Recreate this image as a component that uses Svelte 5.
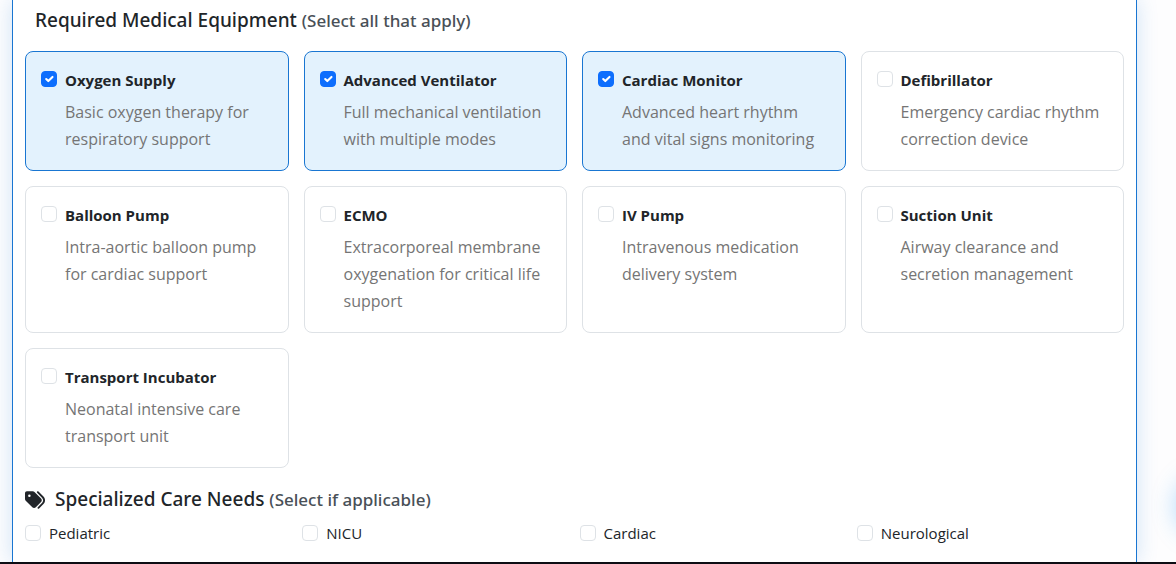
<script>
  let equipment = $state([
    { name: 'Oxygen Supply', text: 'Basic oxygen therapy for respiratory support', on: true },
    { name: 'Advanced Ventilator', text: 'Full mechanical ventilation with multiple modes', on: true },
    { name: 'Cardiac Monitor', text: 'Advanced heart rhythm and vital signs monitoring', on: true },
    { name: 'Defibrillator', text: 'Emergency cardiac rhythm correction device', on: false },
    { name: 'Balloon Pump', text: 'Intra-aortic balloon pump for cardiac support', on: false },
    { name: 'ECMO', text: 'Extracorporeal membrane oxygenation for critical life support', on: false },
    { name: 'IV Pump', text: 'Intravenous medication delivery system', on: false },
    { name: 'Suction Unit', text: 'Airway clearance and secretion management', on: false },
    { name: 'Transport Incubator', text: 'Neonatal intensive care transport unit', on: false }
  ]);
  let needs = $state([
    { name: 'Pediatric', on: false },
    { name: 'NICU', on: false },
    { name: 'Cardiac', on: false },
    { name: 'Neurological', on: false }
  ]);
</script>

<div class="page">
  <main class="panel">
    <h2 class="first">Required Medical Equipment <small>(Select all that apply)</small></h2>
    <div class="cards">
      {#each equipment as item, i}
        <label class="card" class:selected={item.on} for="equipment-{i}">
          <input type="checkbox" id="equipment-{i}" bind:checked={item.on} />
          <span class="body">
            <strong>{item.name}</strong>
            <span class="text">{item.text}</span>
          </span>
        </label>
      {/each}
    </div>

    <h2 class="second">
      <svg viewBox="0 0 512 512" aria-hidden="true">
        <path d="M345 39.1L472.8 168.4c52.4 53 52.4 138.2 0 191.2L360.8 472.9c-9.3 9.4-24.5 9.5-33.9 .2s-9.5-24.5-.2-33.9L438.6 325.9c33.9-34.3 33.9-89.4 0-123.7L310.9 72.9c-9.3-9.4-9.2-24.6 .2-33.9s24.6-9.2 33.9 .2zM0 229.5V80C0 53.5 21.5 32 48 32H197.5c17 0 33.3 6.7 45.3 18.7l168 168c25 25 25 65.5 0 90.5L277.3 442.7c-25 25-65.5 25-90.5 0l-168-168C6.7 262.7 0 246.5 0 229.5zM144 144a32 32 0 1 0 -64 0 32 32 0 1 0 64 0z" />
      </svg>
      <span>Specialized Care Needs <small>(Select if applicable)</small></span>
    </h2>
    <div class="needs">
      {#each needs as need, i}
        <label for="need-{i}">
          <input type="checkbox" id="need-{i}" bind:checked={need.on} />
          <span>{need.name}</span>
        </label>
      {/each}
    </div>
  </main>
  <div class="glow"></div>
</div>

<style>
  :global(body) {
    margin: 0;
    background: #fdfdfe;
  }
  .page {
    position: relative;
    overflow: hidden;
    padding: 0 39px 0 12px;
    border-bottom: 2px solid #0d0d14;
    font-family: 'Segoe UI', 'Open Sans', 'Noto Sans', sans-serif;
    font-size: 16px;
    color: #212529;
  }
  .panel {
    padding: 7px 12px 16px;
    border: solid #1976d2;
    border-width: 0 1px;
    background: #fff;
    box-shadow: 0 0 20px rgba(25, 118, 210, 0.2);
  }
  h2 {
    margin: 0;
    font-family: 'Segoe UI', 'Noto Sans', 'Open Sans', sans-serif;
    font-size: 19px;
    font-weight: 500;
    line-height: 27px;
  }
  small {
    font-size: 17px;
    line-height: 20px;
    color: #495057;
  }
  .first {
    padding-left: 10px;
    margin-bottom: 17px;
  }
  .cards {
    display: grid;
    grid-template-columns: repeat(4, minmax(0, 1fr));
    gap: 15px;
  }
  .card {
    display: flex;
    align-items: flex-start;
    gap: 8px;
    padding: 15px 15px 17px;
    border: 1px solid #dee2e6;
    border-radius: 8px;
    background: #fff;
    cursor: pointer;
  }
  .selected {
    border-color: #1976d2;
    background: #e3f2fd;
  }
  input {
    appearance: none;
    flex: none;
    box-sizing: border-box;
    width: 16px;
    height: 16px;
    margin: 4px 0 0;
    border: 1px solid #dee2e6;
    border-radius: 4px;
    background: #fff;
  }
  input:checked {
    border-color: #0d6efd;
    background: #0d6efd url("data:image/svg+xml,%3Csvg xmlns='http://www.w3.org/2000/svg' viewBox='0 0 20 20'%3E%3Cpath fill='none' stroke='%23fff' stroke-linecap='round' stroke-linejoin='round' stroke-width='3' d='m6 10 3 3 6-6'/%3E%3C/svg%3E") center / contain no-repeat;
  }
  .body {
    display: block;
    min-width: 0;
  }
  strong {
    display: block;
    margin-bottom: 6px;
    font-size: 15px;
    font-weight: 700;
    line-height: 26px;
  }
  .text {
    display: block;
    font-size: 16px;
    line-height: 27px;
    color: #757575;
  }
  .second {
    display: flex;
    align-items: center;
    gap: 10px;
    margin-top: 18px;
  }
  .second svg {
    width: 20px;
    height: 20px;
    fill: #212529;
  }
  .needs {
    display: grid;
    grid-template-columns: repeat(4, minmax(0, 1fr));
    margin: 8px -10px 0 0;
  }
  .needs label {
    display: flex;
    gap: 8px;
    font-size: 15px;
    line-height: 25px;
  }
  .glow {
    position: absolute;
    right: -60px;
    bottom: 26px;
    width: 60px;
    height: 60px;
    border-radius: 50%;
    background: #1976d2;
    box-shadow: 0 0 24px rgba(33, 150, 243, 0.35);
  }
</style>
